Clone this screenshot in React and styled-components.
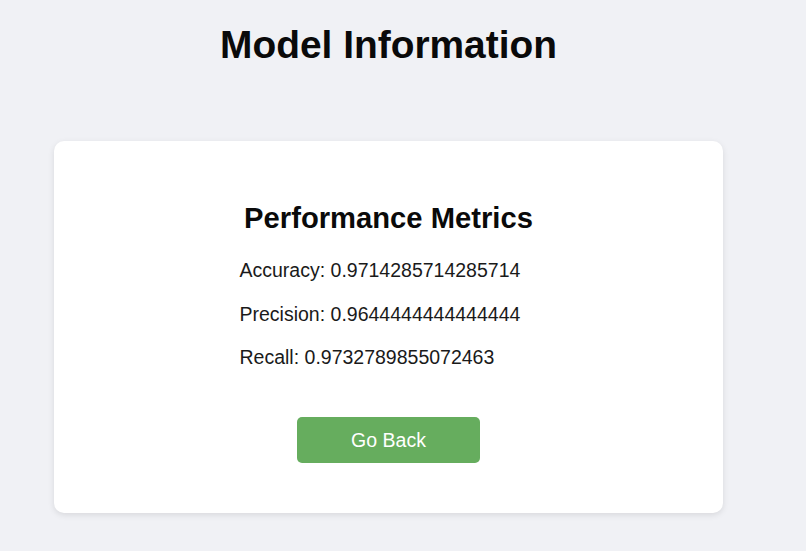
import React from 'react';
import styled, { createGlobalStyle } from 'styled-components';

const GlobalStyle = createGlobalStyle`
  body {
    margin: 0;
    background: #f0f1f5;
    font-family: "Liberation Sans", Arial, sans-serif;
  }
`;

const Page = styled.div`
  width: 777px;
  padding-top: 23px;
  padding-bottom: 39px;
`;

const Title = styled.h1`
  margin: 0 0 74px 0;
  text-align: center;
  font-size: 38.9px;
  font-weight: 700;
  color: #0a0a0a;
`;

const Card = styled.div`
  margin: 0 54px;
  background: #ffffff;
  border-radius: 10px;
  box-shadow: 0 2px 6px rgba(0, 0, 0, 0.1);
  padding: 61px 0 50px;
  display: flex;
  flex-direction: column;
  align-items: center;
`;

const CardTitle = styled.h2`
  margin: 0 0 24px 0;
  font-size: 29.2px;
  font-weight: 700;
  color: #0a0a0a;
`;

const MetricList = styled.div`
  width: 298px;
  display: flex;
  flex-direction: column;
  gap: 20.5px;
`;

const Metric = styled.p`
  margin: 0;
  font-size: 19.5px;
  color: #1a1a1a;
`;

const BackButton = styled.button`
  margin-top: 48px;
  width: 183px;
  height: 46px;
  border: none;
  border-radius: 5px;
  background: #66ad5e;
  color: #ffffff;
  font-family: inherit;
  font-size: 19.5px;
  cursor: pointer;
`;

const metrics = [
  ['Accuracy', '0.9714285714285714'],
  ['Precision', '0.9644444444444444'],
  ['Recall', '0.9732789855072463'],
];

export default function App() {
  return (
    <>
      <GlobalStyle />
      <Page>
        <Title>Model Information</Title>
        <Card>
          <CardTitle>Performance Metrics</CardTitle>
          <MetricList>
            {metrics.map(([name, value]) => (
              <Metric key={name}>{name}: {value}</Metric>
            ))}
          </MetricList>
          <BackButton>Go Back</BackButton>
        </Card>
      </Page>
    </>
  );
}
